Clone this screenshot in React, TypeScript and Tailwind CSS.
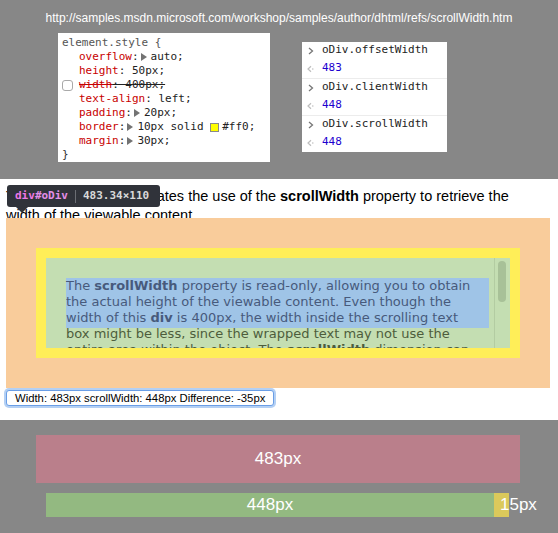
const mono = "font-['DejaVu_Sans_Mono',monospace]"
const sans = "font-['Liberation_Sans',Arial,sans-serif]"

function Tri() {
  return (
    <span className="inline-block ml-[2px] mr-[4px] w-0 h-0 border-t-[4px] border-b-[4px] border-t-transparent border-b-transparent border-l-[6px] border-l-[#737373]" />
  )
}

function Prop({ name, children }: { name: string; children: React.ReactNode }) {
  return (
    <div className="pl-[21px] flex items-center whitespace-pre">
      <span className="text-[#c80000]">{name}</span>
      <span className="text-[#222]">:</span>
      {children}
    </div>
  )
}

function StylesPanel() {
  return (
    <div className={`w-[212px] h-[129px] bg-white pt-[3px] text-[11px] leading-[14px] text-[#222] ${mono}`}>
      <div className="pl-[4px] text-[#555]">element.style {'{'}</div>
      <Prop name="overflow"><Tri />auto;</Prop>
      <Prop name="height"> 50px;</Prop>
      <div className="pl-[4px] flex items-center whitespace-pre">
        <span className="w-[11px] h-[11px] mr-[6px] rounded-[3px] border border-[#a9a9a9] bg-white" />
        <span className="line-through text-[#c80000]">width</span>
        <span className="line-through">: 400px;</span>
      </div>
      <Prop name="text-align"> left;</Prop>
      <Prop name="padding"><Tri />20px;</Prop>
      <Prop name="border">
        <Tri />
        10px solid{' '}
        <span className="inline-block w-[9px] h-[9px] mr-[3px] border border-[#8a8a8a] bg-[#ff0]" />
        #ff0;
      </Prop>
      <Prop name="margin"><Tri />30px;</Prop>
      <div className="pl-[4px] text-[#333]">{'}'}</div>
    </div>
  )
}

function Prompt() {
  return (
    <svg width="6" height="8" viewBox="0 0 6 8" className="mr-[8px]">
      <path d="M1 1l3.5 3L1 7" fill="none" stroke="#777" strokeWidth="1.3" />
    </svg>
  )
}

function Result() {
  return (
    <svg width="7" height="8" viewBox="0 0 7 8" className="mr-[8px] -ml-[1px]">
      <path d="M4 1.2L1 4l3 2.8" fill="none" stroke="#bdbdbd" strokeWidth="1.2" />
      <circle cx="5.8" cy="4" r="0.8" fill="#bdbdbd" />
    </svg>
  )
}

function ConsoleEntry({ cmd, value }: { cmd: string; value: string }) {
  return (
    <div className="h-[37px] border-b border-[#ececec]">
      <div className="h-[17px] pl-[6px] flex items-center text-[#222]">
        <Prompt />
        {cmd}
      </div>
      <div className="h-[19px] pl-[6px] flex items-center text-[#1c00cf]">
        <Result />
        {value}
      </div>
    </div>
  )
}

function ConsolePanel() {
  return (
    <div className={`w-[145px] h-[110px] bg-white text-[11px] overflow-hidden ${mono}`}>
      <ConsoleEntry cmd="oDiv.offsetWidth" value="483" />
      <ConsoleEntry cmd="oDiv.clientWidth" value="448" />
      <ConsoleEntry cmd="oDiv.scrollWidth" value="448" />
    </div>
  )
}

function Tooltip() {
  return (
    <div className="absolute left-[7px] top-[6px]">
      <div className={`h-[22px] w-[153px] rounded-[3px] bg-[#30333a] flex items-center pl-[8px] text-[11px] font-bold ${mono}`}>
        <span className="text-[#ee78e6]">div</span>
        <span className="text-[#e38ee8]">#oDiv</span>
        <span className="mx-[7px] w-px h-[13px] bg-[#6b6e74]" />
        <span className="text-[#d9d9d9]">483.34×110</span>
      </div>
      <div className="ml-[9px] w-0 h-0 border-l-[6px] border-r-[6px] border-t-[6px] border-l-transparent border-r-transparent border-t-[#30333a]" />
    </div>
  )
}

function ScrollBox() {
  return (
    <div className="ml-[30px] mt-[30px] w-[484px] h-[110px] bg-[#ffee58] p-[10px]">
      <div className={`relative w-[464px] h-[90px] bg-[#c4deb2] overflow-hidden pt-[20px] pl-[20px] text-[13px] leading-[16px] font-['DejaVu_Sans',Verdana,sans-serif]`}>
        <div className="w-[423px] h-[50px] bg-[#9fc4e7] text-[#475a7c]">
          <div className="whitespace-nowrap">The <b>scrollWidth</b> property is read-only, allowing you to obtain</div>
          <div className="whitespace-nowrap">the actual height of the viewable content. Even though the</div>
          <div className="whitespace-nowrap">width of this <b>div</b> is 400px, the width inside the scrolling text</div>
        </div>
        <div className="-mt-[2px] text-[#4d5d3c]">
          <div className="whitespace-nowrap">box might be less, since the wrapped text may not use the</div>
          <div className="whitespace-nowrap">entire area within the object. The <b>scrollWidth</b> dimension can</div>
        </div>
        <div className="absolute right-0 top-0 h-full w-[16px] border-l border-[#b3cca2] bg-[#c4deb2]">
          <div className="ml-[3px] mt-[3px] w-[8px] h-[41px] rounded-full bg-[#a8c198]" />
        </div>
      </div>
    </div>
  )
}

export default function App() {
  return (
    <div className={`w-[558px] h-[533px] overflow-hidden flex flex-col ${sans}`}>
      <div className="h-[179px] bg-[#878787] shrink-0">
        <div className="pt-[11px] text-center text-[12px] leading-[14px] text-white">
          http://samples.msdn.microsoft.com/workshop/samples/author/dhtml/refs/scrollWidth.htm
        </div>
        <div className="mt-[8px] pl-[58px] flex items-start">
          <StylesPanel />
          <div className="ml-[32px] mt-[9px]">
            <ConsolePanel />
          </div>
        </div>
      </div>

      <div className="relative h-[241px] bg-white shrink-0">
        <div className="h-[39px] overflow-hidden pt-[8px] pl-[6px]">
          <p className="text-[14.5px] leading-[19px] text-black whitespace-nowrap">
            This example demonstrates the use of the <b>scrollWidth</b> property to retrieve the
            <br />
            width of the viewable content.
          </p>
        </div>
        <div className="ml-[6px] w-[544px] h-[170px] bg-[#f9cc9b] overflow-hidden">
          <ScrollBox />
        </div>
        <div className="ml-[6px] mt-[2px] w-[268px] h-[16px] rounded-[3px] border border-[#6a9ee6] shadow-[0_0_0_2px_#b4d0f4] bg-white flex items-center pl-[8px] text-[11.3px] text-black">
          Width: 483px scrollWidth: 448px Difference: -35px
        </div>
        <Tooltip />
      </div>

      <div className="flex-1 bg-[#878787] pt-[15px]">
        <div className="ml-[36px] w-[484px] h-[48px] bg-[#ba7f8b] flex items-center justify-center text-[17px] text-white">
          483px
        </div>
        <div className="mt-[9px] ml-[46px] flex items-center">
          <div className="w-[448px] h-[24px] bg-[#93b981] flex items-center justify-center text-[17px] text-white">
            448px
          </div>
          <div className="w-[15px] h-[24px] bg-[#dbc95b]" />
          <span className="-ml-[9px] text-[17px] text-white">15px</span>
        </div>
      </div>
    </div>
  )
}
